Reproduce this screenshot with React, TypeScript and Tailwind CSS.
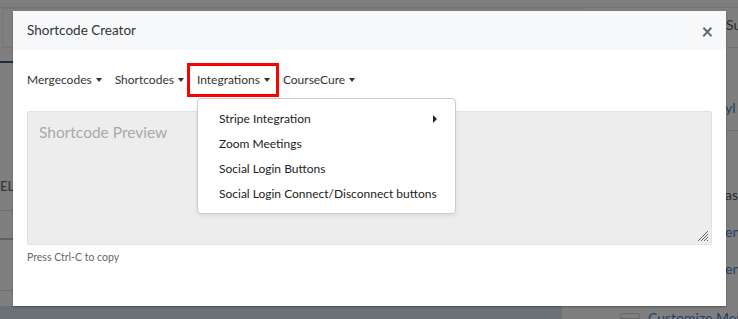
import { useState } from "react";

const navItems = ["Mergecodes", "Shortcodes", "Integrations", "CourseCure"];

const menuItems = [
  { label: "Stripe Integration", sub: true },
  { label: "Zoom Meetings" },
  { label: "Social Login Buttons" },
  { label: "Social Login Connect/Disconnect buttons" },
];

function Caret() {
  return <span className="ml-[4px] inline-block h-0 w-0 border-x-[3px] border-t-[4px] border-x-transparent border-t-[#333]" />;
}

function Backdrop() {
  // faded page behind the modal
  return (
    <div className="absolute inset-0 bg-[#7f7f7f] whitespace-nowrap">
      <div className="absolute left-0 top-0 h-[8px] w-full border-b border-[#737373]" />
      <div className="absolute left-[2px] top-[8px] h-[40px] w-[580px] border border-[#767676]" />
      <div className="absolute left-0 top-[61px] h-[2px] w-[14px] bg-[#1d2a3a]" />
      <div className="absolute left-0 top-[180px] text-[13px] font-semibold leading-none text-[#3a3a3a]">ELI</div>
      <div className="absolute left-0 top-[210px] h-px w-[14px] bg-[#6e6e6e]" />
      <div className="absolute left-0 top-[238px] h-[2px] w-[14px] bg-[#606060]" />
      <div className="absolute left-0 top-[290px] h-px w-[14px] bg-[#6e6e6e]" />
      <div className="absolute left-[726px] top-[18px] text-[14px] leading-none text-[#2b2b2b]">Su</div>
      <div className="absolute left-[727px] top-[47px] h-px w-[11px] bg-[#707070]" />
      <div className="absolute left-[725px] top-[101px] text-[14px] leading-none text-[#1f3f66]">yl</div>
      <div className="absolute left-[726px] top-[130px] h-px w-[12px] bg-[#707070]" />
      <div className="absolute left-[725px] top-[188px] text-[14px] leading-none text-[#2b2b2b]">as</div>
      <div className="absolute left-[725px] top-[225px] text-[14px] leading-none text-[#1f3f66]">en</div>
      <div className="absolute left-[725px] top-[262px] text-[14px] leading-none text-[#1f3f66]">en</div>
      <div className="absolute bottom-0 left-0 h-[13px] w-[562px] bg-[#6b7277]" />
      <div className="absolute bottom-0 left-[620px] h-[6px] w-[20px] rounded-t-[3px] border border-[#666]" />
      <div className="absolute bottom-[-6px] left-[648px] text-[14px] leading-none text-[#1f3f66]">Customize Men</div>
    </div>
  );
}

export default function App() {
  const [active] = useState("Integrations");

  return (
    <div className="relative h-[319px] w-[738px] overflow-hidden font-['Lato','Open_Sans',sans-serif]">
      <Backdrop />

      <div className="absolute left-[13px] top-[11px] flex h-[295px] w-[713px] flex-col rounded-t-[3px] bg-white shadow-[0_1px_2px_rgba(0,0,0,0.35)]">
        <div className="flex h-[39px] items-center justify-between bg-[#f7f8fa] px-[14px]">
          <h2 className="text-[13.5px] text-[#333]">Shortcode Creator</h2>
          <span className="mr-[-1px] text-[20px] font-bold leading-none text-[#666]">×</span>
        </div>

        <div className="relative flex-1 px-[14px]">
          <nav className="mt-[16px] flex h-[28px] items-center">
            {navItems.map((item) => (
              <div
                key={item}
                className={
                  item === active
                    ? "flex h-[28px] items-center px-[6.5px] text-[12px] text-[#333] outline-[3px] outline-solid outline-[#f00]"
                    : "flex h-[28px] items-center px-[6.5px] text-[12px] text-[#333] first:pl-0"
                }
              >
                {item}
                <Caret />
              </div>
            ))}
          </nav>

          <div className="relative mt-[17px] h-[134px] rounded-[2px] border border-[#dbe3ec] bg-[#ededed] px-[11px] pt-[8px]">
            <span className="text-[15.5px] text-[#a9a9a9]">Shortcode Preview</span>
            <svg className="absolute bottom-[2px] right-[2px]" width="12" height="12" viewBox="0 0 12 12">
              <path d="M11 1L1 11M11 4L4 11M11 7L7 11M11 10L10 11" stroke="#666" strokeWidth="1" />
            </svg>
          </div>
          <p className="mt-[5px] text-[10.5px] text-[#666]">Press Ctrl-C to copy</p>

          <div className="absolute left-[184px] top-[48px] w-[259px] rounded-[4px] border border-[#ccc] bg-white py-[7px] shadow-[0_2px_4px_rgba(0,0,0,0.08)]">
            {menuItems.map((m) => (
              <div key={m.label} className="flex h-[25px] items-center justify-between pl-[21px] pr-[18px] text-[12px] text-[#222]">
                {m.label}
                {m.sub && <span className="h-0 w-0 border-y-[4px] border-l-[4px] border-y-transparent border-l-[#222]" />}
              </div>
            ))}
          </div>
        </div>
      </div>
    </div>
  );
}
